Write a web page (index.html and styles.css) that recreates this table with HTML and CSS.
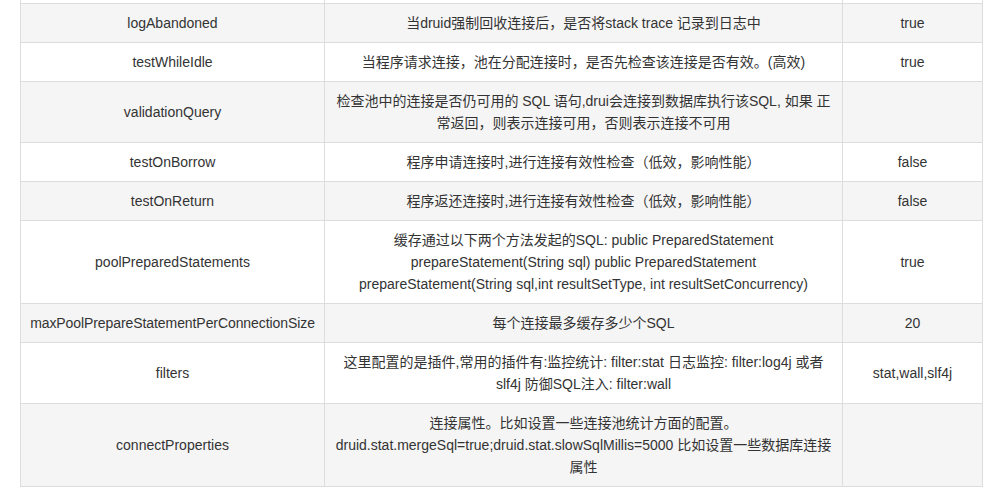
FILE: index.html
```html
<!DOCTYPE html>
<html lang="zh-CN">
<head>
<meta charset="utf-8">
<link rel="stylesheet" href="styles.css">
</head>
<body>
<div class="wrap">
<table class="conf">
  <colgroup><col class="c1"><col class="c2"><col class="c3"></colgroup>
  <tbody>
    <tr class="prev"><td></td><td></td><td></td></tr>
    <tr><td>logAbandoned</td><td>当druid强制回收连接后，是否将stack trace 记录到日志中</td><td>true</td></tr>
    <tr><td>testWhileIdle</td><td>当程序请求连接，池在分配连接时，是否先检查该连接是否有效。(高效)</td><td>true</td></tr>
    <tr><td>validationQuery</td><td>检查池中的连接是否仍可用的 SQL 语句,drui会连接到数据库执行该SQL, 如果 正常返回，则表示连接可用，否则表示连接不可用</td><td></td></tr>
    <tr><td>testOnBorrow</td><td>程序申请连接时,进行连接有效性检查（低效，影响性能）</td><td>false</td></tr>
    <tr><td>testOnReturn</td><td>程序返还连接时,进行连接有效性检查（低效，影响性能）</td><td>false</td></tr>
    <tr><td>poolPreparedStatements</td><td>缓存通过以下两个方法发起的SQL: public PreparedStatement prepareStatement(String sql) public PreparedStatement prepareStatement(String sql,int resultSetType, int resultSetConcurrency)</td><td>true</td></tr>
    <tr><td class="tight">maxPoolPrepareStatementPerConnectionSize</td><td>每个连接最多缓存多少个SQL</td><td>20</td></tr>
    <tr><td>filters</td><td>这里配置的是插件,常用的插件有:监控统计: filter:stat 日志监控: filter:log4j 或者 slf4j 防御SQL注入: filter:wall</td><td>stat,wall,slf4j</td></tr>
    <tr><td>connectProperties</td><td>连接属性。比如设置一些连接池统计方面的配置。 druid.stat.mergeSql=true;druid.stat.slowSqlMillis=5000 比如设置一些数据库连接属性</td><td></td></tr>
  </tbody>
</table>
</div>
</body>
</html>
```
FILE: styles.css
```css
html, body {
  margin: 0;
  padding: 0;
  background: #fff;
}
.wrap {
  padding: 0 0 0 20px;
  overflow: hidden;
  height: 492px;
}
.conf {
  border-collapse: collapse;
  table-layout: fixed;
  width: 962px;
  margin-top: -36px;
  font-family: "Liberation Sans", Arial, "Noto Sans CJK SC", sans-serif;
  font-size: 14px;
  line-height: 22px;
  color: #333;
}
.c1 { width: 304px; }
.c2 { width: 518px; }
.c3 { width: 140px; }
.conf td {
  border: 1px solid #ddd;
  padding: 8px;
  text-align: center;
  vertical-align: middle;
  word-break: break-word;
}
.conf td.tight {
  padding: 8px 6px;
  letter-spacing: -0.08px;
  white-space: nowrap;
}
.conf tr.prev td { height: 22px; }
.conf tr:nth-child(even) td { background: #f5f5f5; }
.conf tr:nth-child(odd) td { background: #fff; }
```
